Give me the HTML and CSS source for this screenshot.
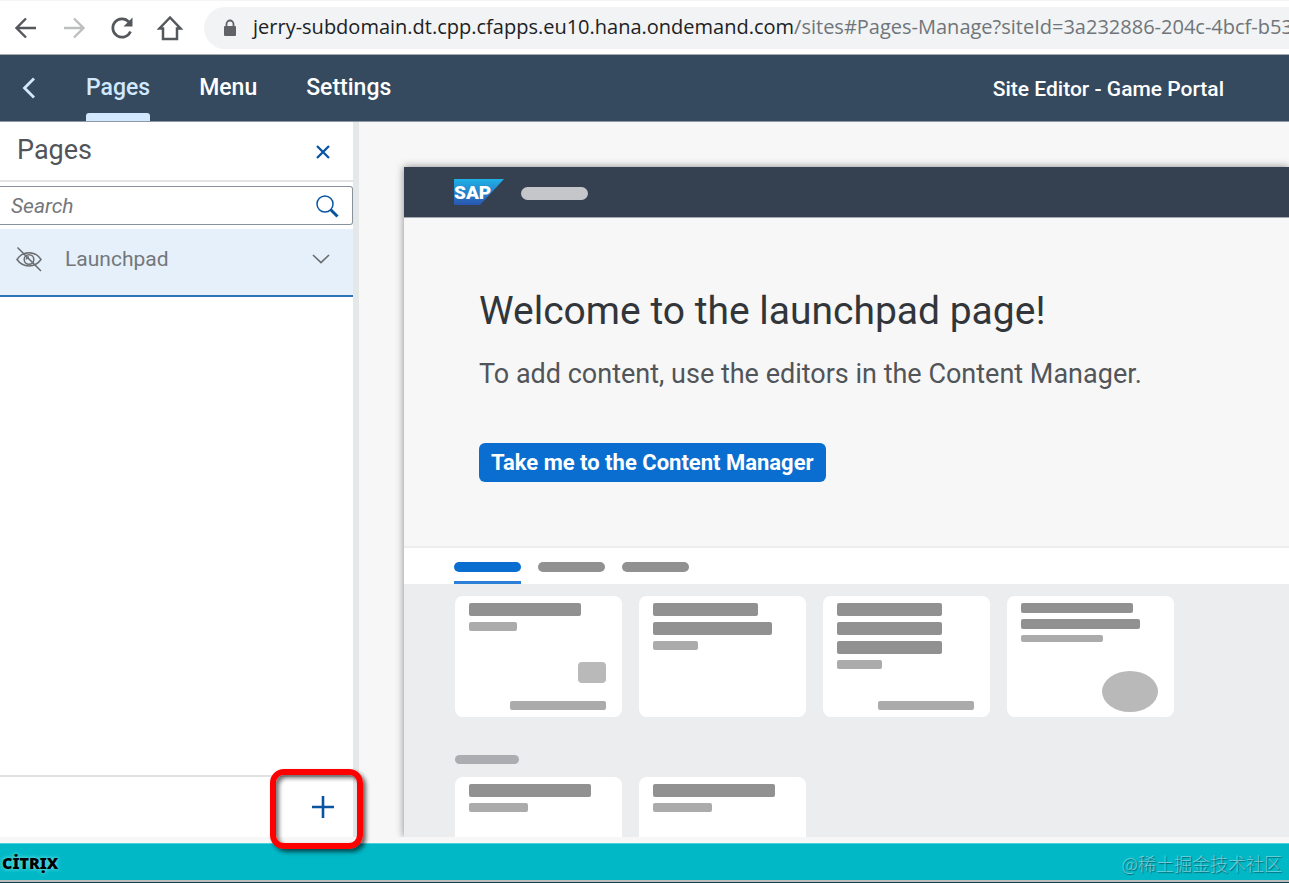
FILE: index.html
```html
<!DOCTYPE html>
<html lang="en">
<head>
<meta charset="utf-8">
<title>Site Editor - Game Portal</title>
<link rel="stylesheet" href="styles.css">
</head>
<body>
<div class="window">
  <div class="browser-bar">
    <button class="nav-btn" aria-label="Back"><svg width="24" height="24" viewBox="0 0 24 24"><path d="M22 12H3M12 2.500L2.500 12l9.500 9.500" fill="none" stroke="#54585c" stroke-width="2.400"/></svg></button>
    <button class="nav-btn" aria-label="Forward"><svg width="24" height="24" viewBox="0 0 24 24"><path d="M2 12h19M12 2.500l9.500 9.500-9.500 9.500" fill="none" stroke="#bcbec0" stroke-width="2.400"/></svg></button>
    <button class="nav-btn" aria-label="Reload"><svg width="24" height="24" viewBox="0 0 24 24"><path d="M20.500 15.500A9.200 9.200 0 1 1 18.800 5.800" fill="none" stroke="#54585c" stroke-width="2.700"/><path d="M22.500 1.500v9h-9z" fill="#54585c"/></svg></button>
    <button class="nav-btn" aria-label="Home"><svg width="26" height="26" viewBox="0 0 26 26"><path d="M13 2.500L2.500 13.500H6V24h14V13.500h3.500z" fill="none" stroke="#54585c" stroke-width="2.500"/></svg></button>
    <div class="address">
      <svg width="14" height="18" viewBox="0 0 14 18"><path d="M3.500 8V5a3.500 3.500 0 0 1 7 0v3" fill="none" stroke="#5f6368" stroke-width="1.800"/><rect x="1" y="7" width="12" height="10" rx="1" fill="#5f6368"/></svg>
      <span class="url"><span class="host">jerry-subdomain.dt.cpp.cfapps.eu10.hana.ondemand.com</span>/sites#Pages-Manage?siteId=3a232886-204c-4bcf-b53</span>
    </div>
  </div>

  <header class="shell">
    <button class="shell-back" aria-label="Navigate back"><svg width="14" height="22" viewBox="0 0 14 22"><path d="M12 1.500L2.500 11l9.500 9.500" fill="none" stroke="#d1e8ff" stroke-width="2.800"/></svg></button>
    <nav class="tabs">
      <a class="tab tab-active" href="#pages">Pages</a>
      <a class="tab" href="#menu">Menu</a>
      <a class="tab" href="#settings">Settings</a>
    </nav>
    <span class="site-title">Site Editor - Game Portal</span>
  </header>

  <main class="workspace">
    <aside class="side">
      <div class="side-head">
        <h2 class="side-title">Pages</h2>
        <button class="icon-btn" aria-label="Close"><svg width="16" height="16" viewBox="0 0 16 16"><path d="M2 2l12 12M14 2L2 14" fill="none" stroke="#0854a0" stroke-width="2.300"/></svg></button>
      </div>
      <form class="search">
        <input class="search-input" type="search" placeholder="Search" aria-label="Search">
        <button class="search-btn" type="button" aria-label="Search"><svg width="24" height="24" viewBox="0 0 24 24"><circle cx="10" cy="10" r="8" fill="none" stroke="#0854a0" stroke-width="1.500"/><path d="M15.500 15.500l7 7" stroke="#0854a0" stroke-width="3"/></svg></button>
      </form>
      <div class="page-item">
        <svg width="26" height="26" viewBox="0 0 26 26" fill="none" stroke="#6a6d70" stroke-width="1.500"><path d="M1 13.500C7 4.500 19 4.500 25 13.500C19 22 7 22 1 13.500z"/><circle cx="13" cy="13.500" r="4.800"/><path d="M10.500 13.500a2.500 2.500 0 0 1 2.500-2.500"/><path d="M1.500 1.500l23.500 23.500"/></svg>
        <span class="page-name">Launchpad</span>
        <button class="icon-btn" aria-label="Expand Launchpad"><svg width="18" height="10" viewBox="0 0 18 10"><path d="M1 1l8 7.500L17 1" fill="none" stroke="#6a6d70" stroke-width="1.700"/></svg></button>
      </div>
      <div class="side-foot">
        <button class="icon-btn" aria-label="Add page"><svg width="22" height="22" viewBox="0 0 22 22"><path d="M11 0v22M0 11h22" stroke="#0854a0" stroke-width="2.600"/></svg></button>
        <span class="highlight"></span>
      </div>
    </aside>

    <section class="canvas">
      <div class="preview">
        <div class="preview-bar">
          <svg class="sap" width="50" height="26" viewBox="0 0 50 26"><defs><linearGradient id="g" x1="0" y1="0" x2="0" y2="1"><stop offset="0" stop-color="#1fb1e8"/><stop offset="1" stop-color="#2a56b0"/></linearGradient></defs><path d="M0 0h50L26 26H0z" fill="url(#g)"/><text class="sap-text" x="0" y="20">SAP</text></svg>
          <span class="bar bar-name"></span>
        </div>
        <div class="hero">
          <h1 class="hero-title">Welcome to the launchpad page!</h1>
          <p class="hero-text">To add content, use the editors in the Content Manager.</p>
          <button class="primary">Take me to the Content Manager</button>
        </div>
        <div class="groups">
          <span class="group group-active"></span><span class="group"></span><span class="group"></span>
        </div>
        <div class="tiles">
          <div class="row">
            <div class="card"><span class="bar w112"></span><span class="bar sub w48"></span><div class="end"><span class="bar square"></span><span class="bar sub w96"></span></div></div>
            <div class="card"><span class="bar w105"></span><span class="bar w119"></span><span class="bar sub w45"></span></div>
            <div class="card"><span class="bar w105"></span><span class="bar w105"></span><span class="bar w105"></span><span class="bar sub w45"></span><div class="end"><span class="bar sub w96"></span></div></div>
            <div class="card card-round"><span class="bar thin w112"></span><span class="bar thin w119"></span><span class="bar line w82"></span><div class="end"><span class="bar oval"></span></div></div>
          </div>
          <span class="bar section-name"></span>
          <div class="row">
            <div class="card"><span class="bar w122"></span><span class="bar sub w59"></span></div>
            <div class="card"><span class="bar w122"></span><span class="bar sub w59"></span></div>
          </div>
        </div>
      </div>
    </section>
  </main>

  <footer class="citrix-bar">
    <span class="citrix">CİTRỊX</span>
    <span class="watermark" lang="zh">@稀土掘金技术社区</span>
  </footer>
</div>
</body>
</html>
```
FILE: styles.css
```css
* { box-sizing: border-box; }
body { margin: 0; background: #f7f7f7; font-family: Roboto, "Noto Sans", sans-serif; }
button { margin: 0; padding: 0; border: 0; background: none; font: inherit; cursor: pointer; }
svg { display: block; flex: none; }
h1, h2, p { margin: 0; font-weight: 400; }

.window { display: flex; flex-direction: column; height: 100vh; overflow: hidden; }

.browser-bar { display: flex; flex: none; align-items: center; height: 55px; padding-left: 14px; background: #fff; border-top: 1px solid #f5f5f6; border-bottom: 1px solid #a9abad; }
.nav-btn { display: flex; justify-content: center; width: 24px; margin-right: 24px; }
.address { display: flex; flex: 1; align-items: center; gap: 16px; min-width: 0; height: 42px; margin-left: -2px; padding-left: 19px; overflow: hidden; background: #f1f3f4; border-radius: 21px 0 0 21px; }
.url { color: #70757a; font-family: "Open Sans", "Noto Sans", sans-serif; font-size: 20px; line-height: 40px; padding-bottom: 2px; white-space: nowrap; }
.host { color: #202124; }

.shell { display: flex; flex: none; align-items: stretch; height: 67px; padding: 0 65px 0 22px; background: #354a5f; border-bottom: 1px solid #8c98a4; }
.shell-back { display: flex; align-items: center; width: 64px; }
.tabs { display: flex; flex: 1; gap: 49px; }
.tab { padding-top: 19px; color: #fff; font-size: 23px; font-weight: 500; line-height: 28px; text-decoration: none; }
.tab-active { color: #d1e8ff; }
.tab-active::after { content: ""; display: block; height: 8px; margin-top: 11px; background: #d1e8ff; border-radius: 3px 3px 0 0; }
.site-title { padding-top: 2px; align-self: center; color: #fff; font-size: 21px; font-weight: 500; }

.workspace { display: flex; flex: 1; min-height: 0; margin-bottom: 6px; }
.side { display: flex; flex: none; flex-direction: column; width: 359px; background: #fff; border-right: 6px solid #e4e8e9; }
.side-head { display: flex; align-items: center; justify-content: space-between; height: 60px; padding: 2px 21px 0 17px; border-bottom: 2px solid #e3e3e3; }
.side-title { padding-bottom: 4px; color: #51555a; font-size: 27px; }
.icon-btn { display: flex; align-items: center; justify-content: center; width: 18px; height: 24px; }
.search { display: flex; align-items: center; height: 39px; margin: 4px 0; padding-right: 13px; border: 1px solid #89919a; border-left: 0; border-radius: 0 3px 3px 0; }
.search-input { flex: 1; min-width: 0; padding: 0 0 0 11px; border: 0; outline: 0; background: none; color: #32363a; font: 21px Roboto, sans-serif; }
.search-input::placeholder { color: #74777a; font-style: italic; }
.page-item { display: flex; align-items: center; height: 68px; padding: 0 23px 6px 16px; background: #e5f0fa; border-bottom: 2px solid #2c73b8; }
.page-name { flex: 1; margin-left: 23px; color: #74777a; font-size: 21px; }
.side-foot { position: relative; display: flex; align-items: center; justify-content: flex-end; height: 62px; margin-top: auto; padding-right: 21px; border-top: 2px solid #e1e1e1; }
.highlight { position: absolute; top: -8px; right: -10px; width: 93px; height: 80px; border: 6px solid #fe0000; border-radius: 14px; box-shadow: 3px 3px 4px rgba(0,0,0,.6), inset 3px 3px 4px rgba(0,0,0,.55); pointer-events: none; }

.canvas { display: flex; flex: 1; min-width: 0; padding: 45px 0 0 45px; overflow: hidden; }
.preview { display: flex; flex: 1; flex-direction: column; min-width: 0; box-shadow: 0 0 8px rgba(0,0,0,.45); }
.preview-bar { display: flex; flex: none; align-items: center; gap: 17px; height: 51px; padding-left: 50px; background: #354050; border-bottom: 1px solid #a3a9b0; }
.sap-text { fill: #fff; font: 900 19px Roboto, sans-serif; }
.bar { flex: none; height: 13px; background: #919191; border-radius: 2px; }
.bar-name { width: 67px; background: #c4c6ca; border-radius: 7px; margin-top: 3px; }
.hero { flex: none; height: 330px; padding: 68px 0 0 75px; background: #f7f7f7; border-bottom: 2px solid #ededed; white-space: nowrap; }
.hero-title { color: #32363a; font-size: 39px; line-height: 50px; }
.hero-text { margin-top: 20px; color: #515559; font-size: 27px; line-height: 36px; }
.primary { height: 39px; margin-top: 51px; padding: 0 12px; background: #0a6ed1; border-radius: 6px; color: #fff; font-size: 22px; font-weight: 700; }
.groups { display: flex; flex: none; gap: 17px; height: 36px; padding: 14px 0 0 50px; background: #fff; }
.group { width: 67px; height: 10px; background: #919191; border-radius: 5px; }
.group-active { position: relative; background: #0a6ed1; }
.group-active::after { content: ""; position: absolute; top: 19px; left: 0; width: 100%; height: 3px; background: #2c80d8; }
.tiles { display: flex; flex: 1; flex-direction: column; min-height: 0; padding: 12px 0 0 51px; overflow: hidden; background: #ebedef; }
.row { display: flex; flex: none; gap: 17px; }
.card { display: flex; flex: none; flex-direction: column; gap: 6px; width: 167px; height: 121px; padding: 7px 16px 7px 14px; background: #fff; border-radius: 8px; }
.card-round { padding-bottom: 5px; }
.end { display: flex; flex-direction: column; align-items: flex-end; gap: 18px; margin-top: auto; }
.sub { height: 9px; background: #ababab; }
.thin { height: 10px; }
.line { height: 7px; background: #ababab; }
.square { width: 28px; height: 21px; background: #b9b9b9; border-radius: 4px; }
.oval { width: 56px; height: 41px; background: #b9b9b9; border-radius: 50%; }
.section-name { width: 64px; height: 9px; margin: 38px 0 13px; background: #abadb0; border-radius: 5px; }
.w45 { width: 45px; }
.w48 { width: 48px; }
.w59 { width: 59px; }
.w82 { width: 82px; }
.w96 { width: 96px; }
.w105 { width: 105px; }
.w112 { width: 112px; }
.w119 { width: 119px; }
.w122 { width: 122px; }

.citrix-bar { display: flex; flex: none; align-items: center; justify-content: space-between; height: 40px; padding: 0 7px 0 2px; background: #00b8c6; border-top: 1px solid #4cd2dc; border-bottom: 1px solid #123f50; box-shadow: inset 0 -2px #bdbdbd; }
.citrix { color: #000; font-family: "Noto Sans", sans-serif; font-size: 16px; font-weight: 900; text-shadow: 0 0 4px #8ff0f5; }
.watermark { color: rgba(255,255,255,.45); font: 300 18px "Noto Sans CJK SC", sans-serif; text-shadow: 1px 1px 1px rgba(0,50,60,.6); }
```
